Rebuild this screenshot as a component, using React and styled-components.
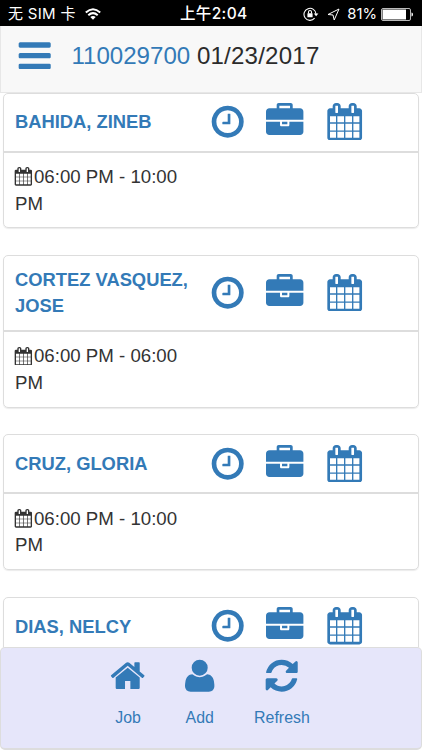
import React from "react";
import styled, { createGlobalStyle } from "styled-components";

const BLUE = "#337ab7";

const GlobalStyle = createGlobalStyle`
  * {
    box-sizing: border-box;
  }
  body {
    margin: 0;
    background: #fff;
    color: #333;
    font-family: "Liberation Sans", Arial, sans-serif;
    font-size: 18.67px;
    line-height: 26.4px;
  }
`;

const Screen = styled.div`
  width: 422px;
  height: 750px;
  display: flex;
  flex-direction: column;
  overflow: hidden;
`;

const StatusBar = styled.div`
  flex: none;
  height: 26px;
  padding: 2px 8px 0 8px;
  display: grid;
  grid-template-columns: 172px 1fr auto;
  align-items: center;
  background: #000;
  color: #fff;
  font-family: Inter, "Noto Sans CJK SC", sans-serif;
  font-size: 16px;
  line-height: 24px;
  white-space: nowrap;
`;

const StatusGroup = styled.div`
  display: flex;
  align-items: center;
`;

const Carrier = styled.span`
  width: 77px;
  font-size: 15px;
  letter-spacing: 0.3px;
`;

const Clock = styled.span`
  font-weight: 500;
  font-size: 15.5px;
  letter-spacing: 0.35px;
`;

const Percent = styled.span`
  margin: 0 4px 0 7px;
  font-size: 14.8px;
`;

const StatusSvg = styled.svg`
  flex: none;
  display: block;
  margin-left: ${(props) => props.$left || 0}px;
`;

const NavBar = styled.header`
  flex: none;
  height: 66.5px;
  padding: 0 15px 6.5px 15px;
  display: flex;
  align-items: center;
  background: #f8f8f8;
  border: 1px solid #e7e7e7;
  border-top: none;
`;

const NavTitle = styled.div`
  margin-left: 18px;
  padding-top: 1px;
  font-size: 24.1px;
  line-height: 30px;
  white-space: pre;
`;

const JobNumber = styled.span`
  color: ${BLUE};
`;

const JobDate = styled.span`
  color: #2b2b2b;
  letter-spacing: 0.2px;
`;

const IconSvg = styled.svg`
  flex: none;
  display: block;
  width: ${(props) => props.$size}px;
  height: ${(props) => props.$size}px;
  fill: ${(props) => props.$color || BLUE};
`;

const List = styled.main`
  flex: 1;
  min-height: 0;
  overflow: hidden;
  padding: 0 3px;
  display: flex;
  flex-direction: column;
  gap: 26.7px;
`;

const Card = styled.section`
  flex: none;
  border: 1px solid #ddd;
  border-radius: 5px;
  box-shadow: 0 1px 1px rgba(0, 0, 0, 0.08);
`;

const CardHeader = styled.div`
  min-height: 59px;
  padding: 11px 11px 10.1px;
  display: grid;
  grid-template-columns: 194.3px 57px 59.3px 1fr;
  align-items: center;
  border-bottom: 2px solid #ddd;
`;

const Name = styled.div`
  font-size: 18.35px;
  font-weight: bold;
  color: ${BLUE};
`;

const IconCell = styled.div`
  margin: -4px 0 -2px;
`;

const CardBody = styled.div`
  padding: 11.6px 11px 10.4px;
`;

const Shift = styled.div`
  width: 175px;
`;

const InlineIcon = styled.span`
  display: inline-block;
  vertical-align: -3px;
  margin: 0 1.3px 0 -1px;
`;

const Footer = styled.footer`
  flex: none;
  height: 103px;
  margin-bottom: 0.5px;
  padding: 9.8px 0 0 108px;
  display: flex;
  align-items: flex-start;
  background: #e6e6fa;
  border: 1px solid #ddd;
  border-bottom-width: 2px;
  border-radius: 5px;
`;

const FooterItem = styled.div`
  width: ${(props) => props.$width}px;
  margin-right: ${(props) => props.$gap || 0}px;
  display: flex;
  flex-direction: column;
  align-items: center;
  gap: 10.7px;
  color: ${BLUE};
  font-size: 15.9px;
`;

// icon outlines on a 1792 unit grid
const icons = {
  bars: "M1664 1344v128q0 26-19 45t-45 19h-1408q-26 0-45-19t-19-45v-128q0-26 19-45t45-19h1408q26 0 45 19t19 45zm0-512v128q0 26-19 45t-45 19h-1408q-26 0-45-19t-19-45v-128q0-26 19-45t45-19h1408q26 0 45 19t19 45zm0-512v128q0 26-19 45t-45 19h-1408q-26 0-45-19t-19-45v-128q0-26 19-45t45-19h1408q26 0 45 19t19 45z",
  clock: "M1024 544v448q0 14-9 23t-23 9h-320q-14 0-23-9t-9-23v-64q0-14 9-23t23-9h224v-352q0-14 9-23t23-9h64q14 0 23 9t9 23zm416 352q0-148-73-273t-198-198-273-73-273 73-198 198-73 273 73 273 198 198 273 73 273-73 198-198 73-273zm224 0q0 209-103 385.5t-279.5 279.5-385.5 103-385.5-103-279.5-279.5-103-385.5 103-385.5 279.5-279.5 385.5-103 385.5 103 279.5 279.5 103 385.5z",
  briefcase: "M640 256h512v-128h-512v128zm1152 640v480q0 66-47 113t-113 47h-1472q-66 0-113-47t-47-113v-480h672v160q0 26 19 45t45 19h320q26 0 45-19t19-45v-160h672zm-768 0v128h-256v-128h256zm768-480v384h-1792v-384q0-66 47-113t113-47h352v-160q0-40 28-68t68-28h576q40 0 68 28t28 68v160h352q66 0 113 47t47 113z",
  calendar: "M192 1664h288v-288h-288v288zm352 0h320v-288h-320v288zm-352-352h288v-320h-288v320zm352 0h320v-320h-320v320zm-352-384h288v-288h-288v288zm736 736h320v-288h-320v288zm-384-736h320v-288h-320v288zm768 736h288v-288h-288v288zm-384-352h320v-320h-320v320zm-352-864v-288q0-13-9.500-22.500t-22.500-9.500h-64q-13 0-22.500 9.500t-9.500 22.500v288q0 13 9.500 22.500t22.500 9.500h64q13 0 22.500-9.500t9.500-22.500zm736 864h288v-320h-288v320zm-384-384h320v-288h-320v288zm384 0h288v-288h-288v288zm32-480v-288q0-13-9.500-22.500t-22.500-9.500h-64q-13 0-22.500 9.500t-9.500 22.500v288q0 13 9.500 22.500t22.500 9.500h64q13 0 22.500-9.500t9.500-22.500zm384-64v1280q0 52-38 90t-90 38h-1408q-52 0-90-38t-38-90v-1280q0-52 38-90t90-38h128v-96q0-66 47-113t113-47h64q66 0 113 47t47 113v96h384v-96q0-66 47-113t113-47h64q66 0 113 47t47 113v96h128q52 0 90 38t38 90z",
  home: "M1472 992v480q0 26-19 45t-45 19h-384v-384h-256v384h-384q-26 0-45-19t-19-45v-480q0-1 .5-3t.5-3l575-474 575 474q1 2 1 6zm223-69l-62 74q-8 9-21 11h-3q-13 0-21-7l-692-577-692 577q-12 8-24 7-13-2-21-11l-62-74q-8-10-7-23.5t11-21.5l719-599q32-26 76-26t76 26l244 204v-195q0-14 9-23t23-9h192q14 0 23 9t9 23v408l219 182q10 8 11 21.5t-7 23.5z",
  user: "M1600 1405q0 120-73 189.5t-194 69.5h-874q-121 0-194-69.5t-73-189.5q0-53 3.5-103.5t14-109 26.5-108.5 43-97.5 62-81 85.5-53.5 111.5-20q9 0 42 21.5t74.5 48 108 48 133.5 21.5 133.5-21.5 108-48 74.5-48 42-21.5q61 0 111.5 20t85.5 53.5 62 81 43 97.5 26.5 108.5 14 109 3.5 103.5zm-320-893q0 159-112.5 271.5t-271.5 112.5-271.5-112.5-112.5-271.5 112.5-271.5 271.5-112.5 271.5 112.5 112.5 271.5z",
  refresh: "M1639 1056q0 5-1 7-64 268-268 434.5t-478 166.5q-146 0-282.5-55t-243.5-157l-129 129q-19 19-45 19t-45-19-19-45v-448q0-26 19-45t45-19h448q26 0 45 19t19 45-19 45l-137 137q71 66 161 102t187 36q134 0 250-65t186-179q11-17 53-117 8-23 30-23h192q13 0 22.5 9.5t9.5 22.5zm25-800v448q0 26-19 45t-45 19h-448q-26 0-45-19t-19-45 19-45l138-138q-148-137-349-137-134 0-250 65t-186 179q-11 17-53 117-8 23-30 23h-199q-13 0-22.5-9.5t-9.5-22.5v-7q65-268 270-434.5t480-166.5q146 0 284 55.5t245 156.5l130-129q19-19 45-19t45 19 19 45z",
};

const workers = [
  { id: 1, name: "BAHIDA, ZINEB", shift: "06:00 PM - 10:00 PM" },
  { id: 2, name: "CORTEZ VASQUEZ, JOSE", shift: "06:00 PM - 06:00 PM" },
  { id: 3, name: "CRUZ, GLORIA", shift: "06:00 PM - 10:00 PM" },
  { id: 4, name: "DIAS, NELCY" },
];

const actions = [
  { label: "Job", icon: "home", width: 38, gap: 33.7 },
  { label: "Add", icon: "user", width: 38, gap: 35 },
  { label: "Refresh", icon: "refresh", width: 56.5 },
];

const Icon = ({ name, size = 37.4, color }) => (
  <IconSvg viewBox="0 0 1792 1792" $size={size} $color={color}>
    <path d={icons[name]} />
  </IconSvg>
);

const Status = () => (
  <StatusBar>
    <StatusGroup>
      <Carrier>无 SIM 卡</Carrier>
      <StatusSvg width="16" height="12" viewBox="0 0 16 12" fill="none" stroke="#fff" strokeWidth="2">
        <path d="M0.8 4.5Q8-2 15.200 4.500" />
        <path d="M3.300 7.200Q8 3 12.700 7.200" />
        <path d="M8 11.800L5.300 9.100Q8 6.900 10.700 9.100Z" fill="#fff" stroke="none" />
      </StatusSvg>
    </StatusGroup>
    <Clock>上午2:04</Clock>
    <StatusGroup>
      <StatusSvg width="16" height="14" viewBox="0 0 16 14" fill="none" stroke="#fff" strokeWidth="1.1">
        <path d="M11.600 11.200A6 6 0 1 1 13 7" />
        <path d="M10.800 6.600H15.400L13.100 9.300Z" fill="#fff" stroke="none" />
        <rect x="4.400" y="6.200" width="5.200" height="4" rx="0.500" fill="#fff" stroke="none" />
        <path d="M5.500 6.500V5a1.500 1.500 0 0 1 3 0V6.500" />
      </StatusSvg>
      <StatusSvg $left={8} width="13" height="13" viewBox="0 0 13 13" fill="none" stroke="#fff" strokeWidth="1">
        <path d="M12 1L1 6.500L6 7L7.200 12Z" />
      </StatusSvg>
      <Percent>81%</Percent>
      <StatusSvg width="33" height="13" viewBox="0 0 33 13">
        <rect x="0.500" y="0.500" width="29" height="12" rx="1.500" fill="none" stroke="#bbb" />
        <rect x="1.500" y="1.500" width="23.500" height="10" fill="#fff" />
        <path d="M30.500 4.500Q32 4.500 32 6.500T30.500 8.500Z" fill="#fff" />
      </StatusSvg>
    </StatusGroup>
  </StatusBar>
);

const WorkerCard = ({ worker }) => (
  <Card>
    <CardHeader>
      <Name>{worker.name}</Name>
      {["clock", "briefcase", "calendar"].map((name) => (
        <IconCell key={name}>
          <Icon name={name} />
        </IconCell>
      ))}
    </CardHeader>
    {worker.shift && (
      <CardBody>
        <Shift>
          <InlineIcon>
            <Icon name="calendar" size={18.7} color="#333" />
          </InlineIcon>
          {worker.shift}
        </Shift>
      </CardBody>
    )}
  </Card>
);

const App = () => {
  return (
    <Screen>
      <GlobalStyle />
      <Status />
      <NavBar>
        <Icon name="bars" />
        <NavTitle>
          <JobNumber>110029700</JobNumber> <JobDate>01/23/2017</JobDate>
        </NavTitle>
      </NavBar>
      <List>
        {workers.map((worker) => (
          <WorkerCard key={worker.id} worker={worker} />
        ))}
      </List>
      <Footer>
        {actions.map((item) => (
          <FooterItem key={item.label} $width={item.width} $gap={item.gap}>
            <Icon name={item.icon} />
            {item.label}
          </FooterItem>
        ))}
      </Footer>
    </Screen>
  );
};

export default App;
